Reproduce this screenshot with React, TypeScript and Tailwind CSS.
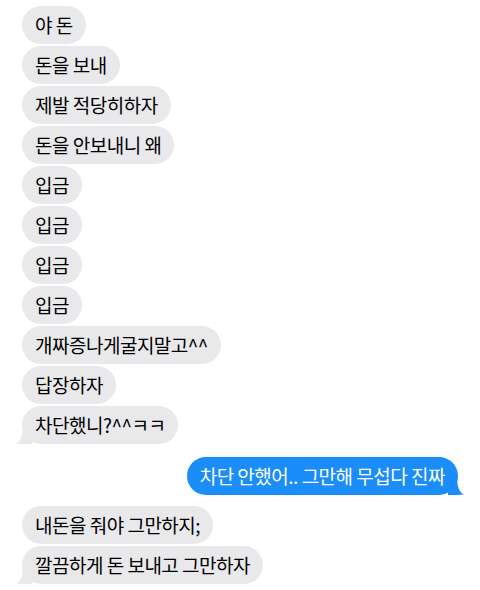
const incoming = [
  "야 돈",
  "돈을 보내",
  "제발 적당히하자",
  "돈을 안보내니 왜",
  "입금",
  "입금",
  "입금",
  "입금",
  "개짜증나게굴지말고^^",
  "답장하자",
  "차단했니?^^ㅋㅋ",
];

const later = ["내돈을 줘야 그만하지;", "깔끔하게 돈 보내고 그만하자"];

function Tail({ side, color }: { side: "left" | "right"; color: string }) {
  const left = side === "left";
  return (
    <svg
      width="16"
      height="20"
      viewBox="0 0 16 20"
      className={left ? "absolute -left-[6px] bottom-0" : "absolute -right-[6px] bottom-0 -scale-x-100"}
    >
      <path d="M16 0 L16 20 C10 20 4 20 0 19.5 C5 17 7 12 7 0 Z" fill={color} />
    </svg>
  );
}

function Bubble({ text, tail, me }: { text: string; tail?: boolean; me?: boolean }) {
  const color = me ? "#1b8df8" : "#e9e9eb";
  return (
    <div
      className={
        "relative flex h-[38px] items-center rounded-[19px] px-[13px] text-[19px] tracking-[-0.5px] " +
        (me ? "bg-[#1b8df8] text-white" : "bg-[#e9e9eb] text-black")
      }
    >
      {tail ? <Tail side={me ? "right" : "left"} color={color} /> : null}
      <span className="relative whitespace-pre">{text}</span>
    </div>
  );
}

export default function App() {
  return (
    <div
      className="h-[590px] w-[480px] overflow-hidden bg-white pt-[6px]"
      style={{ fontFamily: '"Noto Sans CJK KR", "Noto Sans", sans-serif' }}
    >
      <div className="flex flex-col items-start gap-[2px] pl-[22px]">
        {incoming.map((t, i) => (
          <Bubble key={i} text={t} tail={i === incoming.length - 1} />
        ))}
      </div>
      <div className="mt-[13px] flex justify-end pr-[22px]">
        <Bubble text="차단 안했어.. 그만해 무섭다 진짜" me tail />
      </div>
      <div className="mt-[11px] flex flex-col items-start gap-[2px] pl-[22px]">
        {later.map((t, i) => (
          <Bubble key={i} text={t} tail={i === later.length - 1} />
        ))}
      </div>
    </div>
  );
}
